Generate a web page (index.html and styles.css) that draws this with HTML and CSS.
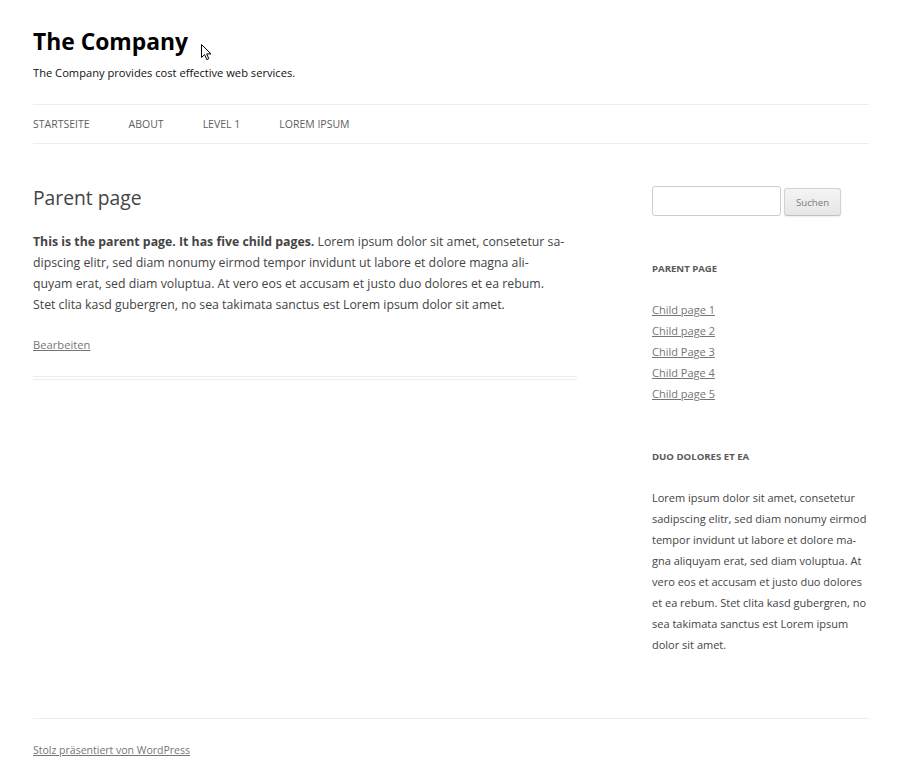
FILE: index.html
```html
<!DOCTYPE html>
<html lang="de">
<head>
<meta charset="utf-8">
<title>The Company</title>
<link rel="stylesheet" href="styles.css">
</head>
<body>
<div class="site">
  <header class="site-header">
    <h1 class="site-title">The Company</h1>
    <h2 class="site-description">The Company provides cost effective web services.</h2>
    <nav class="main-navigation">
      <ul class="nav-menu">
        <li><a href="#">Startseite</a></li>
        <li><a href="#">About</a></li>
        <li><a href="#">Level 1</a></li>
        <li><a href="#">Lorem ipsum</a></li>
      </ul>
    </nav>
  </header>
  <div class="site-main">
    <main class="site-content">
      <article class="page">
        <h1 class="entry-title">Parent page</h1>
        <div class="entry-content">
          <p><strong>This is the parent page. It has five child pages.</strong> Lorem ipsum dolor sit amet, consetetur sa-<br>dipscing elitr, sed diam nonumy eirmod tempor invidunt ut labore et dolore magna ali-<br>quyam erat, sed diam voluptua. At vero eos et accusam et justo duo dolores et ea rebum.<br>Stet clita kasd gubergren, no sea takimata sanctus est Lorem ipsum dolor sit amet.</p>
        </div>
        <footer class="entry-meta"><a href="#">Bearbeiten</a></footer>
      </article>
    </main>
    <aside class="widget-area">
      <div class="widget search-widget">
        <form class="search-form">
          <input class="search-input" type="text">
          <button class="search-button" type="button">Suchen</button>
        </form>
      </div>
      <div class="widget">
        <h3 class="widget-title">Parent page</h3>
        <ul class="widget-list">
          <li><a href="#">Child page 1</a></li>
          <li><a href="#">Child page 2</a></li>
          <li><a href="#">Child Page 3</a></li>
          <li><a href="#">Child Page 4</a></li>
          <li><a href="#">Child page 5</a></li>
        </ul>
      </div>
      <div class="widget">
        <h3 class="widget-title">Duo dolores et ea</h3>
        <p class="widget-text">Lorem ipsum dolor sit amet, consetetur<br>sadipscing elitr, sed diam nonumy eirmod<br>tempor invidunt ut labore et dolore ma-<br>gna aliquyam erat, sed diam voluptua. At<br>vero eos et accusam et justo duo dolores<br>et ea rebum. Stet clita kasd gubergren, no<br>sea takimata sanctus est Lorem ipsum<br>dolor sit amet.</p>
      </div>
    </aside>
  </div>
  <footer class="site-footer">
    <a href="#">Stolz präsentiert von WordPress</a>
  </footer>
</div>
<svg class="cursor" width="12" height="18" viewBox="0 0 12 18" aria-hidden="true">
  <path d="M0.5 0.5 L0.5 13.5 L3.6 10.6 L5.8 15.6 L7.8 14.7 L5.7 9.9 L10 9.9 Z" fill="#fff" stroke="#000" stroke-width="1" stroke-linejoin="round"/>
</svg>
</body>
</html>
```
FILE: styles.css
```css
html, body {
  margin: 0;
  padding: 0;
  background: #fff;
}
body {
  font-family: "Open Sans", "Liberation Sans", sans-serif;
  color: #444;
  font-size: 12.3px;
  line-height: 21px;
  position: relative;
}
.site {
  padding: 0 31px 0 33px;
}
a {
  color: #757575;
}
.site-header {
  padding-top: 21px;
}
.site-title {
  margin: 0;
  font-size: 22.85px;
  line-height: 41px;
  font-weight: 700;
  color: #000;
}
.site-description {
  margin: 0;
  font-size: 11.15px;
  line-height: 21px;
  font-weight: 400;
  color: #111;
}
.main-navigation {
  margin-top: 21px;
  border-top: 1px solid #ededed;
  border-bottom: 1px solid #ededed;
}
.nav-menu {
  list-style: none;
  margin: 0;
  padding: 0;
  display: flex;
  gap: 39px;
}
.nav-menu a {
  display: block;
  font-size: 10.5px;
  line-height: 38px;
  text-transform: uppercase;
  text-decoration: none;
  color: #5e5e5e;
}
.site-main {
  display: flex;
  justify-content: space-between;
  align-items: flex-start;
  padding-top: 42px;
}
.site-content {
  width: 544px;
}
.entry-title {
  margin: 0 0 21px;
  font-size: 19.3px;
  line-height: 24px;
  font-weight: 400;
  color: #444;
}
.entry-content p {
  margin: 0 0 19px;
  white-space: nowrap;
}
.entry-content strong {
  font-weight: 700;
}
.entry-meta {
  font-size: 11.2px;
  line-height: 21px;
  padding-bottom: 21px;
  border-bottom: 4px double #ededed;
}
.widget-area {
  width: 217px;
  display: flex;
  flex-direction: column;
  gap: 42px;
}
.widget {
  font-size: 11px;
  line-height: 21px;
}
.search-form {
  display: flex;
  align-items: flex-end;
  gap: 3px;
}
.search-input {
  box-sizing: border-box;
  width: 129px;
  height: 30px;
  margin: 0;
  border: 1px solid #ccc;
  border-radius: 3px;
  padding: 5px;
  font: inherit;
}
.search-button {
  box-sizing: border-box;
  height: 28px;
  width: 57px;
  margin: 0;
  padding: 0;
  font-family: inherit;
  font-size: 9.7px;
  color: #7c7c7c;
  background: linear-gradient(to bottom, #f4f4f4, #e6e6e6);
  border: 1px solid #d2d2d2;
  border-bottom-color: #c1c1c1;
  border-radius: 3px;
  box-shadow: 0 1px 2px rgba(64, 64, 64, 0.1);
}
.widget-title {
  margin: 0 0 20px;
  font-size: 9.6px;
  line-height: 21px;
  font-weight: 700;
  text-transform: uppercase;
  color: #5a5a5a;
}
.widget-list {
  list-style: none;
  margin: 0;
  padding: 0;
}
.widget-text {
  margin: 0;
  white-space: nowrap;
}
.site-footer {
  margin-top: 63px;
  border-top: 1px solid #ededed;
  padding: 21px 0;
  font-size: 10.5px;
  line-height: 21px;
}
.cursor {
  position: absolute;
  left: 201px;
  top: 44px;
}
```
